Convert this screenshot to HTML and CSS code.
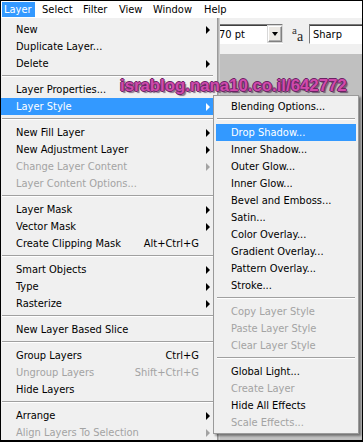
FILE: index.html
```html
<!DOCTYPE html>
<html>
<head>
<meta charset="utf-8">
<title>Layer menu</title>
<link rel="stylesheet" href="styles.css">
</head>
<body>
<div class="frame">
  <div class="menubar">
    <span class="mb active">Layer</span>
    <span class="mb">Select</span>
    <span class="mb">Filter</span>
    <span class="mb">View</span>
    <span class="mb">Window</span>
    <span class="mb">Help</span>
  </div>
  <div class="main">
    <div class="menu">
      <div class="item"><span class="lbl">New</span><span class="sc"></span><span class="arr"></span></div>
      <div class="item"><span class="lbl">Duplicate Layer...</span></div>
      <div class="item"><span class="lbl">Delete</span><span class="sc"></span><span class="arr"></span></div>
      <div class="sep"></div>
      <div class="item"><span class="lbl">Layer Properties...</span></div>
      <div class="item hot"><span class="lbl">Layer Style</span><span class="sc"></span><span class="arr"></span></div>
      <div class="sep"></div>
      <div class="item"><span class="lbl">New Fill Layer</span><span class="sc"></span><span class="arr"></span></div>
      <div class="item"><span class="lbl">New Adjustment Layer</span><span class="sc"></span><span class="arr"></span></div>
      <div class="item off"><span class="lbl">Change Layer Content</span><span class="sc"></span><span class="arr"></span></div>
      <div class="item off"><span class="lbl">Layer Content Options...</span></div>
      <div class="sep"></div>
      <div class="item"><span class="lbl">Layer Mask</span><span class="sc"></span><span class="arr"></span></div>
      <div class="item"><span class="lbl">Vector Mask</span><span class="sc"></span><span class="arr"></span></div>
      <div class="item"><span class="lbl">Create Clipping Mask</span><span class="sc">Alt+Ctrl+G</span></div>
      <div class="sep"></div>
      <div class="item"><span class="lbl">Smart Objects</span><span class="sc"></span><span class="arr"></span></div>
      <div class="item"><span class="lbl">Type</span><span class="sc"></span><span class="arr"></span></div>
      <div class="item"><span class="lbl">Rasterize</span><span class="sc"></span><span class="arr"></span></div>
      <div class="sep"></div>
      <div class="item"><span class="lbl">New Layer Based Slice</span></div>
      <div class="sep"></div>
      <div class="item"><span class="lbl">Group Layers</span><span class="sc">Ctrl+G</span></div>
      <div class="item off"><span class="lbl">Ungroup Layers</span><span class="sc">Shift+Ctrl+G</span></div>
      <div class="item"><span class="lbl">Hide Layers</span></div>
      <div class="sep"></div>
      <div class="item"><span class="lbl">Arrange</span><span class="sc"></span><span class="arr"></span></div>
      <div class="item off"><span class="lbl">Align Layers To Selection</span><span class="sc"></span><span class="arr"></span></div>
    </div>
    <div class="right">
      <div class="toolbar">
        <div class="field size"><span class="ftext">70 pt</span><span class="dd"><span class="ddtri"></span></span></div>
        <div class="aa"><span class="a1">a</span><span class="a2">a</span></div>
        <div class="field aamode"><span class="ftext">Sharp</span></div>
      </div>
      <div class="canvas"></div>
    </div>
  </div>
  <div class="submenu">
    <div class="item"><span class="lbl">Blending Options...</span></div>
    <div class="sep"></div>
    <div class="item hot"><span class="lbl">Drop Shadow...</span></div>
    <div class="item"><span class="lbl">Inner Shadow...</span></div>
    <div class="item"><span class="lbl">Outer Glow...</span></div>
    <div class="item"><span class="lbl">Inner Glow...</span></div>
    <div class="item"><span class="lbl">Bevel and Emboss...</span></div>
    <div class="item"><span class="lbl">Satin...</span></div>
    <div class="item"><span class="lbl">Color Overlay...</span></div>
    <div class="item"><span class="lbl">Gradient Overlay...</span></div>
    <div class="item"><span class="lbl">Pattern Overlay...</span></div>
    <div class="item"><span class="lbl">Stroke...</span></div>
    <div class="sep"></div>
    <div class="item off"><span class="lbl">Copy Layer Style</span></div>
    <div class="item off"><span class="lbl">Paste Layer Style</span></div>
    <div class="item off"><span class="lbl">Clear Layer Style</span></div>
    <div class="sep"></div>
    <div class="item"><span class="lbl">Global Light...</span></div>
    <div class="item off"><span class="lbl">Create Layer</span></div>
    <div class="item"><span class="lbl">Hide All Effects</span></div>
    <div class="item off"><span class="lbl">Scale Effects...</span></div>
  </div>
  <div class="watermark">israblog.nana10.co.il/642772</div>
</div>
</body>
</html>
```

FILE: styles.css
```css
html, body {
  margin: 0;
  padding: 0;
}
body {
  width: 363px;
  height: 442px;
  overflow: hidden;
  background: #000;
  font-family: "DejaVu Sans Condensed", "Liberation Sans", sans-serif;
  font-size: 11px;
  color: #000;
}
.frame {
  position: relative;
  width: 363px;
  height: 442px;
  box-sizing: border-box;
  border: 1px solid #000;
  border-bottom-width: 2px;
  background: #c0c0c0;
  overflow: hidden;
  display: flex;
  flex-direction: column;
}
.menubar {
  height: 17px;
  flex: none;
  background: #fff;
  display: grid;
  grid-template-columns: 38px 41px 36px 34px 51px auto;
  align-items: center;
  padding-left: 1px;
}
.mb {
  justify-self: start;
  height: 15px;
  line-height: 15px;
  padding: 0 3px 0 2px;
  white-space: nowrap;
}
.mb.active {
  background: #3399ff;
  color: #fff;
}
.main {
  flex: 1;
  display: flex;
  min-height: 0;
}
.menu {
  width: 216px;
  flex: none;
  background: #f0f0f0;
  border-right: 1px solid #9a9a9a;
  box-shadow: 1px 0 0 #b4b4b4, 2px 0 0 #cfcfcf;
  padding-top: 3px;
  position: relative;
  z-index: 2;
}
.item {
  height: 17px;
  display: grid;
  grid-template-columns: 1fr auto 16px;
  align-items: center;
  margin-right: 2px;
  white-space: nowrap;
}
.lbl {
  padding-left: 15px;
}
.arr {
  margin-left: 7px;
  width: 0;
  height: 0;
  border-top: 4px solid transparent;
  border-bottom: 4px solid transparent;
  border-left: 4px solid #000;
}
.item.hot {
  background: #3399ff;
  color: #fff;
}
.item.hot .arr {
  border-left-color: #fff;
}
.item.off {
  color: #a3a3a3;
}
.item.off .arr {
  border-left-color: #a3a3a3;
}
.sep {
  height: 9px;
  margin: 0 4px 0 1px;
  box-sizing: border-box;
  padding-top: 3px;
}
.sep::before {
  content: "";
  display: block;
  border-top: 1px solid #a0a0a0;
  border-bottom: 1px solid #fff;
}
.right {
  flex: 1;
  display: flex;
  flex-direction: column;
  min-width: 0;
}
.toolbar {
  height: 36px;
  flex: none;
  background: #f0f0f0;
  display: flex;
  align-items: flex-start;
  padding-top: 6px;
  box-sizing: border-box;
}
.field {
  height: 20px;
  box-sizing: border-box;
  background: #fff;
  border: 1px solid #fff;
  border-top-color: #7a7a7a;
  border-left-color: #7a7a7a;
  box-shadow: inset 0 1px 0 #404040;
  display: flex;
  align-items: center;
}
.field.size {
  width: 65px;
  border-left: none;
}
.ftext {
  padding-left: 1px;
}
.dd {
  margin-left: auto;
  margin-right: 0;
  width: 14px;
  height: 16px;
  box-sizing: border-box;
  background: #ece9e4;
  border: 1px solid #808080;
  border-top-color: #fff;
  border-left-color: #fff;
  box-shadow: inset -1px -1px 0 #b0b0b0, 0 0 0 1px #d8d8d8;
  display: flex;
  align-items: center;
  justify-content: center;
}
.ddtri {
  width: 0;
  height: 0;
  border-left: 3.5px solid transparent;
  border-right: 3.5px solid transparent;
  border-top: 4px solid #000;
}
.aa {
  margin-left: 9px;
  width: 16px;
  height: 20px;
  position: relative;
  font-family: "Liberation Serif", serif;
  display: flex;
  align-items: flex-start;
}
.a1 {
  font-size: 11px;
  line-height: 12px;
  color: #333;
}
.a2 {
  font-size: 14px;
  line-height: 14px;
  margin-top: 6px;
  color: #222;
}
.field.aamode {
  margin-left: 1px;
  flex: 1;
  margin-right: -6px;
}
.aamode .ftext {
  padding-left: 3px;
}
.canvas {
  flex: 1;
  background: #c0c0c0;
}
.submenu {
  position: absolute;
  left: 212px;
  top: 94px;
  width: 140px;
  background: #f0f0f0;
  border: 1px solid #9a9a9a;
  padding: 2px;
  box-shadow: 2px 2px 2px rgba(0, 0, 0, 0.4);
  z-index: 3;
}
.submenu .item {
  margin-right: 0;
}
.submenu .sep {
  margin: 0 1px;
}
.watermark {
  position: absolute;
  left: 119px;
  top: 76px;
  z-index: 4;
  font-family: "Liberation Sans", sans-serif;
  font-weight: bold;
  font-size: 16.8px;
  line-height: 17px;
  white-space: nowrap;
  color: #cf4aab;
  text-shadow: -1px 0 #6a2464, 1px 0 #6a2464, 0 -1px #6a2464, 0 1px #6a2464, 2px 2px 1px rgba(60, 20, 60, 0.6);
}
```
